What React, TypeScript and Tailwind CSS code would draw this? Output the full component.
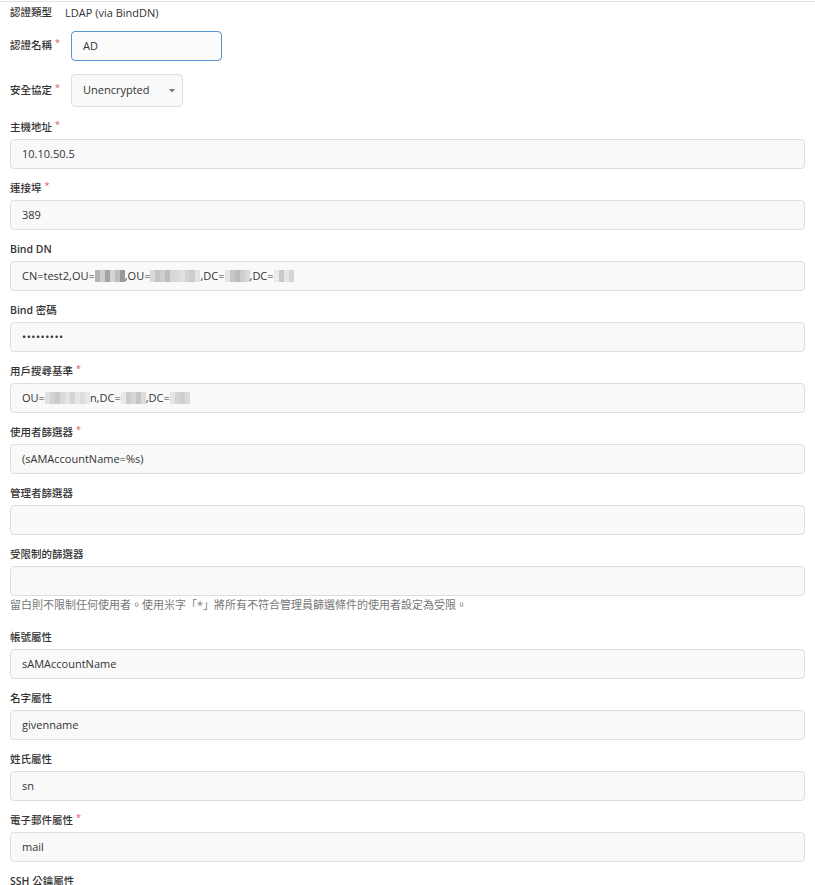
import React from "react";

const FONT = { fontFamily: '"Open Sans", "Noto Sans CJK TC", sans-serif' };

// latin parts of a label are semibold, CJK parts a touch lighter (as the original font renders them)
function LabelText({ text }: { text: string }) {
  const parts = text.split(/([\u3000-\u9fff\uff00-\uffef]+)/).filter(Boolean);
  return (
    <span className="whitespace-pre">
      {parts.map((p, i) =>
        /[\u3000-\u9fff]/.test(p) ? (
          <span key={i} className="font-medium">{p}</span>
        ) : (
          <span key={i} className="font-semibold">{p}</span>
        )
      )}
    </span>
  );
}

// pixelated censor block: a row of grey cells
function Mosaic({ cells }: { cells: string[] }) {
  return (
    <span className="inline-flex h-[12px] align-[-2px]">
      {cells.map((c, i) => (
        <span key={i} className="inline-block h-full w-[5px]" style={{ background: c }} />
      ))}
    </span>
  );
}

function Req() {
  return <span className="relative -top-[3px] ml-[3px] text-[9px] text-[#e05252]">*</span>;
}

interface FieldProps {
  label: string;
  required?: boolean;
  value?: React.ReactNode;
  help?: string;
}

function Field({ label, required, value, help }: FieldProps) {
  return (
    <div className={help ? "mb-[16px]" : "mb-[11px]"}>
      <div className="mb-[2px] flex h-[18px] items-center text-[10.5px] text-[#333]">
        <LabelText text={label} />
        {required && <Req />}
      </div>
      <div className="flex h-[30px] items-center rounded-[4px] border border-[#dedede] bg-[#f9f9f9] px-[11px] text-[11px] text-[#333]">
        {value}
      </div>
      {help && <div className="mt-px h-[16px] text-[11px] leading-[16px] text-[#777]">{help}</div>}
    </div>
  );
}

export default function App() {
  const bindDn = (
    <span className="whitespace-nowrap">
      CN=test2,OU=
      <Mosaic cells={["#b3b3b3", "#cdcdcd", "#a3a3a3", "#d4d4d4", "#bdbdbd", "#999999"]} />
      ,OU=
      <Mosaic cells={["#d8d8d8", "#c4c4c4", "#cfcfcf", "#bdbdbd", "#d6d6d6", "#dadada", "#e0e0e0", "#d2d2d2", "#cdcdcd", "#e3e3e3"]} />
      ,DC=
      <Mosaic cells={["#e4e4e4", "#c7c7c7", "#bdbdbd", "#cfcfcf", "#d9d9d9"]} />
      ,DC=
      <Mosaic cells={["#ececec", "#c9c9c9", "#e5e5e5", "#d6d6d6"]} />
    </span>
  );

  const baseDn = (
    <span className="whitespace-nowrap">
      OU=
      <Mosaic cells={["#e0e0e0", "#d2d2d2", "#cacaca", "#d9d9d9", "#e3e3e3", "#d5d5d5", "#e6e6e6", "#dddddd", "#e8e8e8"]} />
      n,DC=
      <Mosaic cells={["#e9e9e9", "#cbcbcb", "#d6d6d6", "#c6c6c6", "#dcdcdc"]} />
      ,DC=
      <Mosaic cells={["#e6e6e6", "#d4d4d4", "#cfcfcf", "#dbdbdb"]} />
    </span>
  );

  return (
    <div className="min-h-[885px] w-[815px] bg-white pt-px" style={FONT}>
      <div className="border-t border-[#e3e3e3] px-[10px]">
        <div className="flex h-[22px] items-center text-[#333]">
          <span className="mr-[13px] text-[10.5px]">
            <LabelText text="認證類型" />
          </span>
          <span className="text-[11px]">LDAP (via BindDN)</span>
        </div>

        <div className="mt-[7px] flex items-center">
          <span className="mr-[11px] flex items-center text-[10.5px] text-[#333]">
            <LabelText text="認證名稱" />
            <Req />
          </span>
          <div className="flex h-[30px] w-[151px] items-center rounded-[4px] border border-[#5393d6] bg-[#fbfbfb] px-[11px] text-[11px] text-[#333]">
            AD
          </div>
        </div>

        <div className="mt-[13px] flex items-center">
          <span className="mr-[11px] flex items-center text-[10.5px] text-[#333]">
            <LabelText text="安全協定" />
            <Req />
          </span>
          <div className="flex h-[33px] w-[112px] items-center justify-between rounded-[4px] border border-[#dedede] bg-[#f9f9f9] pl-[11px] pr-[7px] text-[11px] text-[#333]">
            <span>Unencrypted</span>
            <svg width="6" height="4" viewBox="0 0 6 4">
              <path d="M0 0 L6 0 L3 3.5 Z" fill="#777" />
            </svg>
          </div>
        </div>

        <div className="mt-[12px]">
          <Field label="主機地址" required value="10.10.50.5" />
          <Field label="連接埠" required value="389" />
          <Field label="Bind DN" value={bindDn} />
          <Field label="Bind 密碼" value={<span className="tracking-[0.5px]">•••••••••</span>} />
          <Field label="用戶搜尋基準" required value={baseDn} />
          <Field label="使用者篩選器" required value="(sAMAccountName=%s)" />
          <Field label="管理者篩選器" />
          <Field
            label="受限制的篩選器"
            help="留白則不限制任何使用者。使用米字「*」將所有不符合管理員篩選條件的使用者設定為受限。"
          />
          <Field label="帳號屬性" value="sAMAccountName" />
          <Field label="名字屬性" value="givenname" />
          <Field label="姓氏屬性" value="sn" />
          <Field label="電子郵件屬性" required value="mail" />
          <Field label="SSH 公鑰屬性" />
        </div>
      </div>
    </div>
  );
}
